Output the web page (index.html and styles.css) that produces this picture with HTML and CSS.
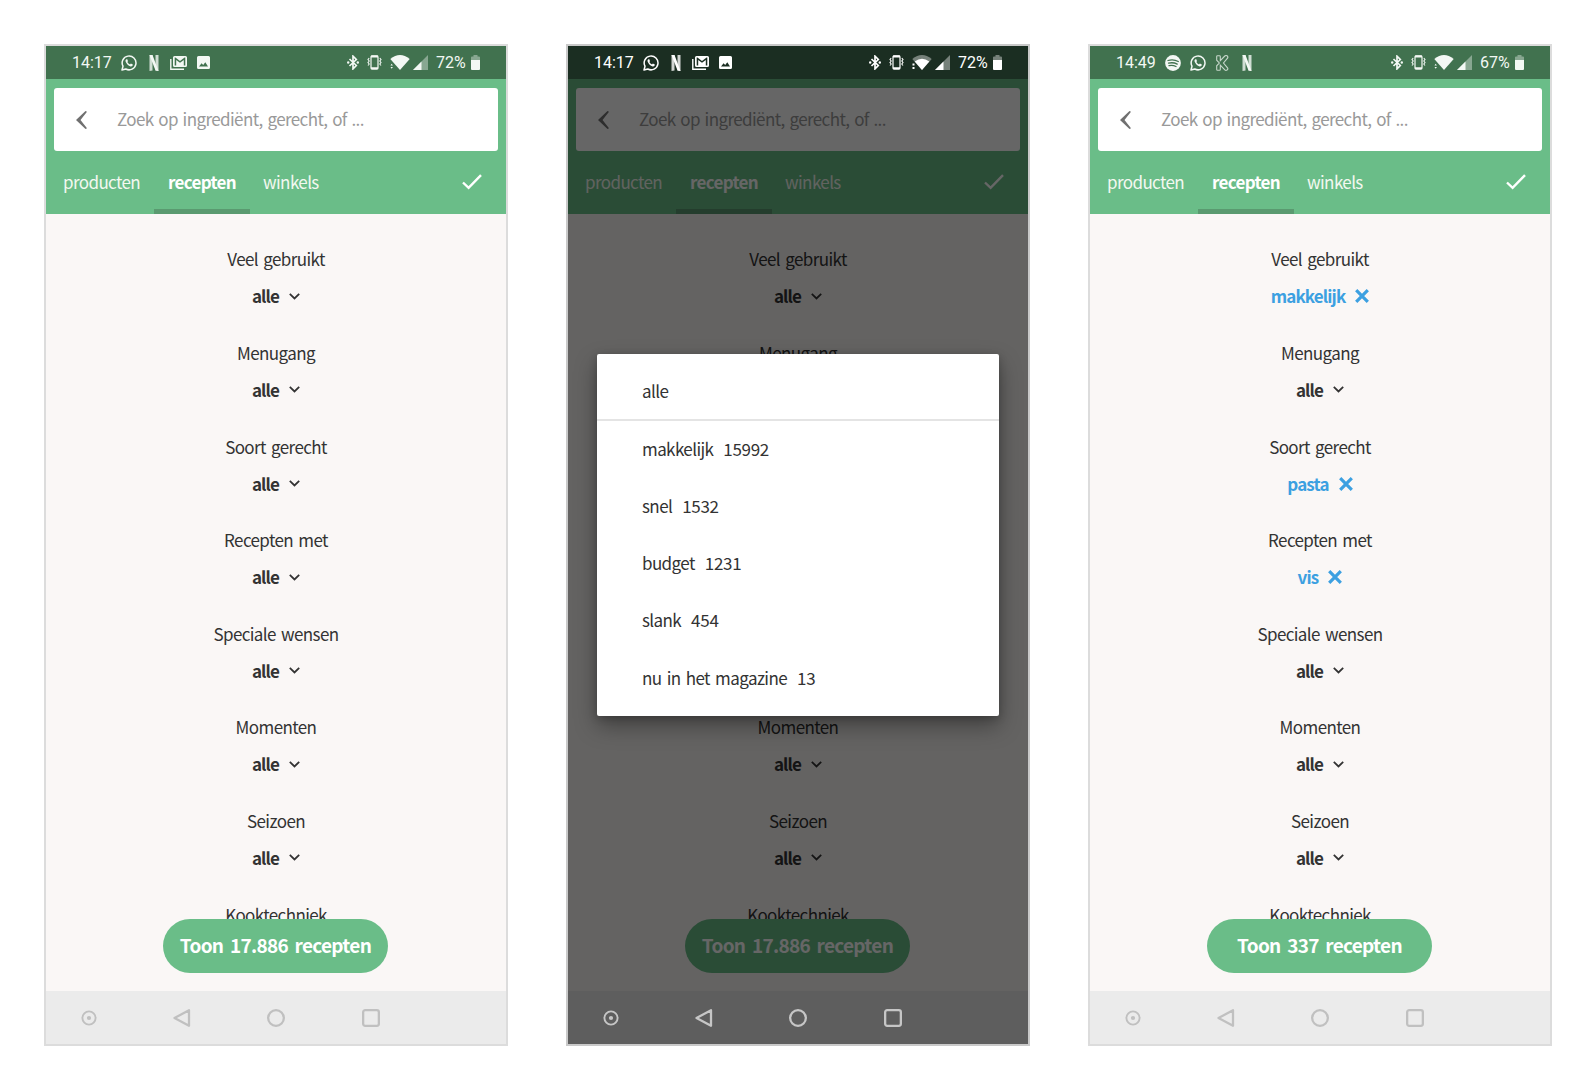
FILE: index.html
```html
<!DOCTYPE html>
<html lang="nl">
<head>
<meta charset="utf-8">
<title>Recepten filteren</title>
<link rel="stylesheet" href="styles.css">
</head>
<body>
<svg class="sprite" aria-hidden="true">
  <symbol id="whatsapp" viewBox="0 0 16 16"><path d="M1 15l1-3.8A6.9 6.9 0 1 1 4.8 14z" fill="none" stroke="currentColor" stroke-width="1.5" stroke-linejoin="round"/><path d="M5.4 4.2c-.9.4-1.100 1.500-.7 2.500.9 2.300 2.700 4 4.900 4.700 1 .3 2-.3 2.200-1.300v-.5L9.900 8.600l-.9 1c-1.200-.5-2.100-1.400-2.700-2.500l.7-.9-.7-1.900z" fill="currentColor"/></symbol>
  <symbol id="netflix" viewBox="0 0 10 16"><path d="M.5 0h3v15.500l-3 .5zM6.500 0h3v16l-3-.5z" fill="currentColor" opacity=".8"/><path d="M.5 0h3l6 16-3-.4z" fill="currentColor"/></symbol>
  <symbol id="mail" viewBox="0 0 17 14"><path d="M.8 3v10.200H14" fill="none" stroke="currentColor" stroke-width="1.400"/><path d="M4.500 0h11Q17 0 17 1.500v8q0 1.500-1.500 1.500h-11Q3 11 3 9.500v-8Q3 0 4.500 0zM4.700 1.500v8h1.500V4L10 6.800 13.800 4v5.500h1.500v-8h-.7L10 4.900 5.400 1.500z" fill="currentColor" fill-rule="evenodd"/></symbol>
  <symbol id="picture" viewBox="0 0 13 13"><path d="M1.500 0h10Q13 0 13 1.500v10q0 1.500-1.500 1.500h-10Q0 13 0 11.500v-10Q0 0 1.500 0zM2 10.500h9L8.300 6.300 6.200 9 4.600 7.300z" fill="currentColor" fill-rule="evenodd"/></symbol>
  <symbol id="spotify" viewBox="0 0 16 16"><mask id="waves"><rect width="16" height="16" fill="#fff"/><path d="M3 5.500q5.500-1.600 10.300 1M3.500 8.200q4.600-1.200 8.700.9M4 10.700q3.700-.8 7 .8" fill="none" stroke="#000" stroke-width="1.300" stroke-linecap="round"/></mask><circle cx="8" cy="8" r="7.900" fill="currentColor" mask="url(#waves)"/></symbol>
  <symbol id="kapp" viewBox="0 0 13 16"><path d="M1.500 .7h2q.8 0 .8.800v4.200L8.800 1q1-.8 2.200-.2 1.400 1 .5 2.400L7.500 8l4 4.800q.9 1.300-.5 2.300-1.200.7-2.200-.2L4.300 10.200v4.200q0 .9-.8.900h-2q-.8 0-.8-.9v-3.600L3.300 8 .7 5.200V1.500q0-.8.800-.8z" fill="none" stroke="currentColor" stroke-width="1.100"/></symbol>
  <symbol id="bluetooth" viewBox="0 0 12 15"><path d="M2.500 4l6.800 6.500L6 13.800V1.200l3.300 3.300L2.500 11" fill="none" stroke="currentColor" stroke-width="1.700"/><circle cx="1.200" cy="7.500" r="1.200" fill="currentColor"/><circle cx="10.800" cy="7.500" r="1.200" fill="currentColor"/></symbol>
  <symbol id="vibrate" viewBox="0 0 15 15"><rect x="4" y=".9" width="7" height="13.200" rx="1" fill="none" stroke="currentColor" stroke-width="1.200"/><path d="M4 1.500h7M4 13.200h7" stroke="currentColor" stroke-width="1.800"/><path d="M2.200 3L1 4.500l1.200 1.500L1 7.500l1.200 1.500L1 10.500M12.800 3L14 4.500l-1.200 1.500L14 7.500l-1.200 1.500L14 10.500" fill="none" stroke="currentColor" stroke-width="1.100"/></symbol>
  <symbol id="wifi" viewBox="0 0 20 15"><path d="M.3 4Q10-3.800 19.700 4L10 15z" fill="currentColor"/><path d="M.5 10.500h2.400l-1.200-1.800zM.5 12h2.400l-1.200 1.800z" fill="currentColor"/></symbol>
  <symbol id="wifi-weak" viewBox="0 0 20 15"><path d="M.3 4Q10-3.800 19.700 4L10 15z" fill="currentColor" opacity=".4"/><path d="M2.700 6.500Q10 1.100 17.300 6.500L10 15z" fill="currentColor"/><path d="M.5 8.500h2v2h-2zM.5 12h2v2h-2z" fill="currentColor"/></symbol>
  <symbol id="signal" viewBox="0 0 15 15"><path d="M15 0v15H0z" fill="currentColor" opacity=".4"/><path d="M8.500 6.500V15H0z" fill="currentColor"/></symbol>
  <symbol id="battery" viewBox="0 0 9 15"><path d="M2.500 0h4v1.500H8q1 0 1 1V5H0V2.500q0-1 1-1h1.500z" fill="currentColor" opacity=".4"/><path d="M0 5h9v9q0 1-1 1H1q-1 0-1-1z" fill="currentColor"/></symbol>
  <symbol id="back" viewBox="0 0 11 18"><path d="M9.500 0L11 .8 4.500 9l6.500 8.200-1.500.8L0 9z" fill="currentColor"/></symbol>
  <symbol id="check" viewBox="0 0 20 16"><path d="M1 8.500l5.600 5.300L19 1.200" fill="none" stroke="currentColor" stroke-width="2.400"/></symbol>
  <symbol id="chevron" viewBox="0 0 11 7"><path d="M.8.900l4.700 4.500L10.200.9" fill="none" stroke="currentColor" stroke-width="1.800"/></symbol>
  <symbol id="cross" viewBox="0 0 14 14"><path d="M1.200 1.200l11.600 11.600M12.800 1.200L1.200 12.800" fill="none" stroke="currentColor" stroke-width="3.200"/></symbol>
  <symbol id="nav-dot" viewBox="0 0 16 16"><circle cx="8" cy="8" r="6.600" fill="none" stroke="currentColor" stroke-width="1.900"/><circle cx="8" cy="8" r="2.100" fill="currentColor"/></symbol>
  <symbol id="nav-back" viewBox="0 0 18 18"><path d="M16 1.200v15.600L1.500 9z" fill="none" stroke="currentColor" stroke-width="2.300" stroke-linejoin="round"/></symbol>
  <symbol id="nav-home" viewBox="0 0 18 18"><circle cx="9" cy="9" r="7.850" fill="none" stroke="currentColor" stroke-width="2.300"/></symbol>
  <symbol id="nav-recent" viewBox="0 0 18 18"><rect x="1.150" y="1.150" width="15.700" height="15.700" rx="2" fill="none" stroke="currentColor" stroke-width="2.300"/></symbol>
</svg>

<main class="screens">
  <section class="phone">
    <div class="status">
      <div class="status-side"><span class="time">14:17</span><svg class="i-app"><use href="#whatsapp"/></svg><svg class="i-netflix"><use href="#netflix"/></svg><svg class="i-mail"><use href="#mail"/></svg><svg class="i-picture"><use href="#picture"/></svg></div>
      <div class="status-side"><svg class="i-bt"><use href="#bluetooth"/></svg><svg class="i-vibrate"><use href="#vibrate"/></svg><svg class="i-wifi"><use href="#wifi"/></svg><svg class="i-signal"><use href="#signal"/></svg><span class="level">72%</span><svg class="i-battery"><use href="#battery"/></svg></div>
    </div>
    <header class="header">
      <div class="search"><svg class="i-back"><use href="#back"/></svg><span class="placeholder">Zoek op ingrediënt, gerecht, of ...</span></div>
      <nav class="tabs"><span class="tab tab-products">producten</span><span class="tab tab-recipes">recepten</span><span class="tab tab-stores">winkels</span><svg class="i-check"><use href="#check"/></svg></nav>
    </header>
    <div class="filters">
      <div class="filter"><span class="label">Veel gebruikt</span><span class="value">alle<svg class="i-chevron"><use href="#chevron"/></svg></span></div>
      <div class="filter"><span class="label">Menugang</span><span class="value">alle<svg class="i-chevron"><use href="#chevron"/></svg></span></div>
      <div class="filter"><span class="label">Soort gerecht</span><span class="value">alle<svg class="i-chevron"><use href="#chevron"/></svg></span></div>
      <div class="filter"><span class="label">Recepten met</span><span class="value">alle<svg class="i-chevron"><use href="#chevron"/></svg></span></div>
      <div class="filter"><span class="label">Speciale wensen</span><span class="value">alle<svg class="i-chevron"><use href="#chevron"/></svg></span></div>
      <div class="filter"><span class="label">Momenten</span><span class="value">alle<svg class="i-chevron"><use href="#chevron"/></svg></span></div>
      <div class="filter"><span class="label">Seizoen</span><span class="value">alle<svg class="i-chevron"><use href="#chevron"/></svg></span></div>
      <div class="filter"><span class="label">Kooktechniek</span></div>
      <div class="show">Toon 17.886 recepten</div>
    </div>
    <div class="navbar"><svg class="n-dot"><use href="#nav-dot"/></svg><svg><use href="#nav-back"/></svg><svg><use href="#nav-home"/></svg><svg><use href="#nav-recent"/></svg></div>
  </section>

  <section class="phone dimmed">
    <div class="status">
      <div class="status-side"><span class="time">14:17</span><svg class="i-app"><use href="#whatsapp"/></svg><svg class="i-netflix"><use href="#netflix"/></svg><svg class="i-mail"><use href="#mail"/></svg><svg class="i-picture"><use href="#picture"/></svg></div>
      <div class="status-side"><svg class="i-bt"><use href="#bluetooth"/></svg><svg class="i-vibrate"><use href="#vibrate"/></svg><svg class="i-wifi"><use href="#wifi-weak"/></svg><svg class="i-signal"><use href="#signal"/></svg><span class="level">72%</span><svg class="i-battery"><use href="#battery"/></svg></div>
    </div>
    <header class="header">
      <div class="search"><svg class="i-back"><use href="#back"/></svg><span class="placeholder">Zoek op ingrediënt, gerecht, of ...</span></div>
      <nav class="tabs"><span class="tab tab-products">producten</span><span class="tab tab-recipes">recepten</span><span class="tab tab-stores">winkels</span><svg class="i-check"><use href="#check"/></svg></nav>
    </header>
    <div class="filters">
      <div class="filter"><span class="label">Veel gebruikt</span><span class="value">alle<svg class="i-chevron"><use href="#chevron"/></svg></span></div>
      <div class="filter"><span class="label">Menugang</span></div>
      <div class="filter"></div>
      <div class="filter"></div>
      <div class="filter"></div>
      <div class="filter"><span class="label">Momenten</span><span class="value">alle<svg class="i-chevron"><use href="#chevron"/></svg></span></div>
      <div class="filter"><span class="label">Seizoen</span><span class="value">alle<svg class="i-chevron"><use href="#chevron"/></svg></span></div>
      <div class="filter"><span class="label">Kooktechniek</span></div>
      <div class="show">Toon 17.886 recepten</div>
    </div>
    <div class="navbar"><svg class="n-dot"><use href="#nav-dot"/></svg><svg><use href="#nav-back"/></svg><svg><use href="#nav-home"/></svg><svg><use href="#nav-recent"/></svg></div>
    <div class="scrim"></div>
    <div class="dialog">
      <div class="option all">alle</div>
      <div class="option">makkelijk<span class="count">15992</span></div>
      <div class="option">snel<span class="count">1532</span></div>
      <div class="option">budget<span class="count">1231</span></div>
      <div class="option">slank<span class="count">454</span></div>
      <div class="option">nu in het magazine<span class="count">13</span></div>
    </div>
  </section>

  <section class="phone">
    <div class="status">
      <div class="status-side"><span class="time">14:49</span><svg class="i-app"><use href="#spotify"/></svg><svg class="i-app next"><use href="#whatsapp"/></svg><svg class="i-kapp"><use href="#kapp"/></svg><svg class="i-netflix last"><use href="#netflix"/></svg></div>
      <div class="status-side"><svg class="i-bt"><use href="#bluetooth"/></svg><svg class="i-vibrate"><use href="#vibrate"/></svg><svg class="i-wifi"><use href="#wifi"/></svg><svg class="i-signal"><use href="#signal"/></svg><span class="level">67%</span><svg class="i-battery"><use href="#battery"/></svg></div>
    </div>
    <header class="header">
      <div class="search"><svg class="i-back"><use href="#back"/></svg><span class="placeholder">Zoek op ingrediënt, gerecht, of ...</span></div>
      <nav class="tabs"><span class="tab tab-products">producten</span><span class="tab tab-recipes">recepten</span><span class="tab tab-stores">winkels</span><svg class="i-check"><use href="#check"/></svg></nav>
    </header>
    <div class="filters">
      <div class="filter"><span class="label">Veel gebruikt</span><span class="value chosen">makkelijk<svg class="i-cross"><use href="#cross"/></svg></span></div>
      <div class="filter"><span class="label">Menugang</span><span class="value">alle<svg class="i-chevron"><use href="#chevron"/></svg></span></div>
      <div class="filter"><span class="label">Soort gerecht</span><span class="value chosen">pasta<svg class="i-cross"><use href="#cross"/></svg></span></div>
      <div class="filter"><span class="label">Recepten met</span><span class="value chosen">vis<svg class="i-cross"><use href="#cross"/></svg></span></div>
      <div class="filter"><span class="label">Speciale wensen</span><span class="value">alle<svg class="i-chevron"><use href="#chevron"/></svg></span></div>
      <div class="filter"><span class="label">Momenten</span><span class="value">alle<svg class="i-chevron"><use href="#chevron"/></svg></span></div>
      <div class="filter"><span class="label">Seizoen</span><span class="value">alle<svg class="i-chevron"><use href="#chevron"/></svg></span></div>
      <div class="filter"><span class="label">Kooktechniek</span></div>
      <div class="show">Toon 337 recepten</div>
    </div>
    <div class="navbar"><svg class="n-dot"><use href="#nav-dot"/></svg><svg><use href="#nav-back"/></svg><svg><use href="#nav-home"/></svg><svg><use href="#nav-recent"/></svg></div>
  </section>
</main>
</body>
</html>
```
FILE: styles.css
```css
* { box-sizing: border-box; }
body {
  margin: 0;
  background: #fff;
  color: #333;
  font: 17px/24px "Noto Sans CJK SC", "Noto Sans", sans-serif;
  letter-spacing: -.6px;
  word-spacing: 2px;
}
svg { display: block; flex: none; }
.sprite { position: absolute; width: 0; height: 0; }
.screens { display: flex; gap: 58px; padding: 44px; }
.phone {
  position: relative;
  display: flex;
  flex-direction: column;
  flex: none;
  width: 464px;
  height: 1002px;
  border: 2px solid #dcdcdc;
  background: #faf7f6;
}
.dimmed { border-color: #c9c9c9; }

.status {
  display: flex;
  justify-content: space-between;
  height: 33px;
  padding: 0 26px;
  background: #41724f;
  color: #f3f8f4;
  font: 16px/33px Roboto, sans-serif;
  letter-spacing: 0;
}
.status-side { display: flex; align-items: center; }
.time { width: 49px; }
.i-app { width: 16px; height: 16px; }
.i-netflix { width: 10px; height: 16px; margin-left: 12px; }
.i-mail { width: 17px; height: 14px; margin-left: 11px; }
.i-picture { width: 13px; height: 13px; margin-left: 10px; }
.i-app.next { margin-left: 9px; }
.i-kapp { width: 13px; height: 16px; margin-left: 10px; opacity: .75; }
.i-netflix.last { margin-left: 13px; }
.i-bt { width: 12px; height: 15px; }
.i-vibrate { width: 15px; height: 15px; margin-left: 8px; }
.i-wifi { width: 20px; height: 15px; margin-left: 8px; }
.i-signal { width: 15px; height: 15px; margin-left: 3px; }
.level { width: 35px; margin-left: 8px; }
.i-battery { width: 9px; height: 15px; }

.header {
  display: flex;
  flex-direction: column;
  height: 135px;
  padding: 9px 8px 0;
  background: #6abd88;
}
.search {
  display: flex;
  align-items: center;
  height: 63px;
  padding-left: 22px;
  border-radius: 3px;
  background: #fff;
}
.i-back { width: 11px; height: 18px; color: #707070; }
.placeholder { margin-left: 30px; padding-bottom: 2px; color: #999; word-spacing: 1.5px; }
.tabs { display: flex; height: 63px; color: #f3f8f0; line-height: 62px; }
.tab-products { width: 100px; padding-left: 9px; }
.tab-recipes {
  width: 96px;
  border-bottom: 5px solid #5a9a70;
  color: #fff;
  font-weight: 700;
  letter-spacing: -.7px;
  text-align: center;
}
.tab-stores { flex: 1; padding-left: 13px; }
.i-check { width: 20px; height: 16px; margin: 23px 16px 0 0; color: #fff; }

.filters {
  position: relative;
  flex: 1;
  overflow: hidden;
  padding-top: 33.400px;
}
.filter {
  display: flex;
  flex-direction: column;
  align-items: center;
  gap: 13px;
  height: 93.6px;
}
.value { display: flex; align-items: center; gap: 10px; font-weight: 700; letter-spacing: -.85px; }
.i-chevron { width: 11px; height: 7px; }
.i-cross { width: 14px; height: 14px; }
.chosen { color: #3ca0e1; }
.show {
  position: absolute;
  left: 117px;
  bottom: 18px;
  width: 225px;
  height: 54px;
  border-radius: 27px;
  background: #6abd88;
  color: #fff;
  font-size: 19px;
  font-weight: 700;
  letter-spacing: -.7px;
  word-spacing: 3px;
  line-height: 52px;
  text-align: center;
  white-space: nowrap;
}
.navbar {
  display: flex;
  align-items: center;
  gap: 76.500px;
  height: 53px;
  padding-left: 34.500px;
  background: #ebebeb;
  color: #c0c0c0;
}
.navbar svg { width: 18px; height: 18px; }
.navbar .n-dot { width: 16px; height: 16px; margin-right: -.5px; }

.scrim { position: absolute; inset: 0; background: rgba(0, 0, 0, .6); }
.dimmed .status { background: #1b2e22; color: #fff; }
.dimmed .status, .dimmed .navbar { position: relative; z-index: 1; }
.dimmed .navbar { background: #5e5e5e; color: #c6c6c6; }
.dialog {
  position: absolute;
  z-index: 2;
  left: 29px;
  top: 308px;
  width: 402px;
  height: 362px;
  border-radius: 2px;
  background: #fff;
  box-shadow: 0 10px 22px rgba(0, 0, 0, .35), 0 2px 8px rgba(0, 0, 0, .2);
}
.option { display: flex; gap: 10px; height: 57.300px; padding-left: 45px; line-height: 55px; }
.option.all { height: 66.500px; padding-top: 9px; border-bottom: 2px solid #e4e4e4; }
.count { letter-spacing: -.3px; }
```
